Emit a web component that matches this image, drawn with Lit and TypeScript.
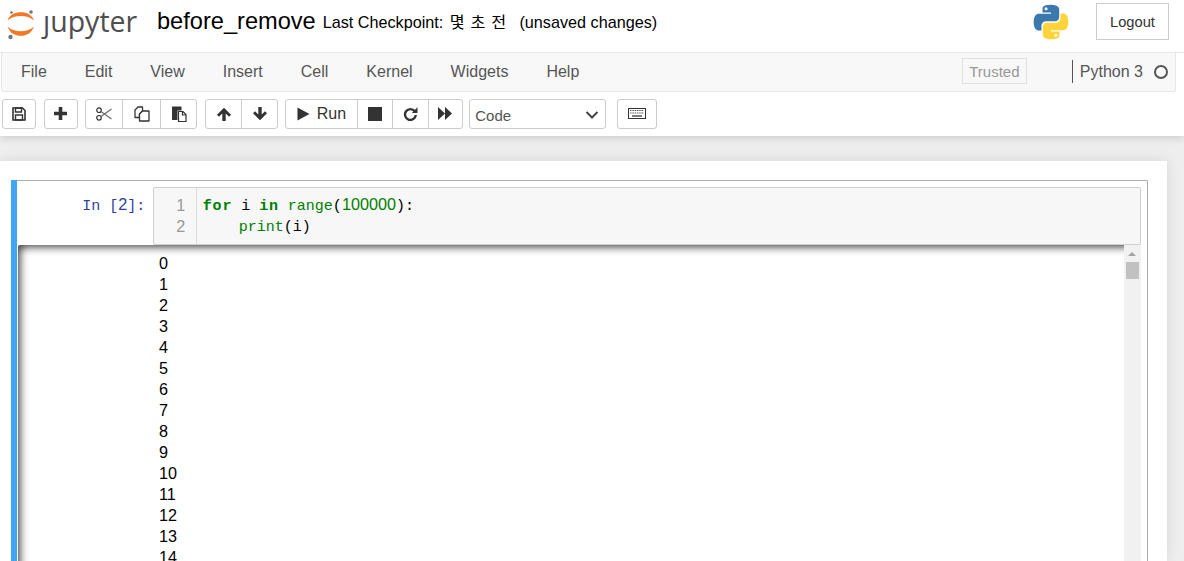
import { LitElement, html, css, svg } from "lit";
import { customElement } from "lit/decorators.js";

const ICONS: Record<string, any> = {
  save: svg`<svg width="14" height="14" viewBox="0 0 14 14"><path d="M1 1h9.500L13 3.500V13H1z" fill="none" stroke="#333" stroke-width="1.600"/><path d="M3.500 1h6v4h-6z" fill="none" stroke="#333" stroke-width="1.400"/><path d="M3.500 8h7v5h-7z" fill="none" stroke="#333" stroke-width="1.400"/></svg>`,
  plus: svg`<svg width="13" height="13" viewBox="0 0 13 13"><path d="M4.700 0h3.600v4.700H13v3.600H8.300V13H4.700V8.300H0V4.700h4.700z" fill="#333"/></svg>`,
  cut: svg`<svg width="16" height="14" viewBox="0 0 16 14"><g fill="none" stroke="#333" stroke-width="1.200"><circle cx="3" cy="3.200" r="2.300"/><circle cx="3" cy="10.800" r="2.300"/></g><path d="M5 4.500 15.500 12M5 9.500 15.500 2" fill="none" stroke="#666" stroke-width="1.100"/></svg>`,
  copy: svg`<svg width="16" height="16" viewBox="0 0 16 16"><g fill="#fff" stroke="#333" stroke-width="1.300" stroke-linejoin="round"><path d="M1 4 4 1h4.500v4L5.500 8v3.500H1z"/><path d="M5.500 8 8.500 5H15v10H5.500z"/></g></svg>`,
  paste: svg`<svg width="16" height="16" viewBox="0 0 16 16"><path d="M1 .5h9.500v4H6.500v9.500H1z" fill="#333"/><path d="M7.500 5.500h4.500l3 3V15.500H7.500z" fill="#fff" stroke="#333" stroke-width="1.200"/><path d="M11.500 5.500v3.500H15" fill="none" stroke="#333" stroke-width="1.200"/></svg>`,
  up: svg`<svg width="14" height="14" viewBox="0 0 14 14"><path d="M7 .8 14 7.800l-2 2-3.300-3.300V14H5.300V6.500L2 9.800l-2-2z" fill="#333"/></svg>`,
  down: svg`<svg width="14" height="14" viewBox="0 0 14 14"><path d="M7 13.200 0 6.200l2-2 3.300 3.300V0h3.400v7.500L12 4.200l2 2z" fill="#333"/></svg>`,
  play: svg`<svg width="13" height="14" viewBox="0 0 13 14"><path d="M.5 .5 12.500 7 .5 13.500z" fill="#333"/></svg>`,
  stop: svg`<svg width="14" height="14" viewBox="0 0 14 14"><rect width="14" height="14" fill="#333"/></svg>`,
  restart: svg`<svg width="15" height="14" viewBox="0 0 15 14"><path d="M11.700 4.200A5.400 5.400 0 1 0 12.800 8" fill="none" stroke="#333" stroke-width="2.400"/><path d="M8.800 6h5.700V.2z" fill="#333"/></svg>`,
  ff: svg`<svg width="14" height="13" viewBox="0 0 14 13"><path d="M0 0 7 6.500 0 13zM7 0 14 6.500 7 13z" fill="#333"/></svg>`,
  kbd: svg`<svg width="18" height="11" viewBox="0 0 18 11"><rect x=".5" y=".5" width="17" height="10" fill="#fff" stroke="#333"/><path d="M2 2.500h14M2 5h14" stroke="#555" stroke-width="1.200" stroke-dasharray="1.500 .8"/><path d="M4 8h10" stroke="#555" stroke-width="1.500"/></svg>`,
};

@customElement("app-root")
export class AppRoot extends LitElement {
  static styles = css`
    :host { display: block; width: 1184px; height: 561px; overflow: hidden; background: #eee;
      font-family: "Liberation Sans", "Noto Sans CJK KR", sans-serif; color: #333; }
    .top { background: #fff; height: 136px; display: flex; flex-direction: column;
      box-shadow: 0 2px 8px rgba(0,0,0,.15); position: relative; z-index: 1; }
    .head { height: 53px; display: flex; align-items: center; padding-left: 7px; box-sizing: border-box; border-bottom: 1px solid #e7e7e7; flex: none; }
    .logo { display: block; flex: none; margin-top: -7px; }
    .logotext { font-family: "Open Sans", "Liberation Sans", sans-serif; font-size: 28.500px; color: #4e4e4e; margin-left: 8px; width: 105px; line-height: 40px; margin-top: -11px; }
    .title { font-size: 23.600px; color: #000; margin-left: 9px; margin-top: -10px; }
    .ck { font-size: 16.200px; color: #000; margin-left: 7px; margin-top: -10px; white-space: pre; }
    .ko { letter-spacing: .7px; margin-left: 2px; margin-right: -1px; }
    .pylogo { margin-left: auto; margin-top: -9px; display: block; }
    .logout { margin-left: 27px; margin-right: 15px; margin-top: -9px; width: 73px; height: 37px; border: 1px solid #ccc; box-sizing: border-box;
      display: flex; align-items: center; justify-content: center; font-size: 14.700px; color: #333; }
    .menu { margin: 0 8px 0 1px; height: 39px; box-sizing: border-box; background: #f8f8f8; border: 1px solid #e7e7e7; border-top: 0; border-radius: 0 0 3px 3px;
      display: flex; align-items: center; flex: none; font-size: 16px; color: #555; }
    .mi { padding: 0 19px; }
    .trusted { margin-left: auto; font-size: 15px; color: #999; border: 1px solid #e0e0e0; height: 26px; width: 65px; box-sizing: border-box; display: flex; align-items: center; justify-content: center; margin-top: -2px; }
    .kernel { margin-left: 45px; border-left: 1px solid #555; height: 23px; padding-left: 7px; display: flex; align-items: center; margin-top: -1px; }
    .dot { width: 10px; height: 10px; border: 2px solid #555; border-radius: 50%; margin: 0 7px 0 11px; }
    .tools { display: flex; margin: 7px 0 0 1.700px; flex: none; align-items: stretch; height: 29.500px; }
    .grp { display: flex; border: 1px solid #ccc; border-radius: 3px; background: #fff; margin-right: 7.400px; box-sizing: border-box; flex: none; }
    .btn { display: flex; align-items: center; justify-content: center; border-left: 1px solid #ccc; gap: 7px; font-size: 16px; color: #333; flex: none; }
    .btn:first-child { border-left: 0; }
    .btn span { padding-top: 1px; }
    .sel { flex: none; width: 136.400px; margin-left: -1.400px; margin-right: 11.600px; border: 1px solid #ccc; border-radius: 3px; box-sizing: border-box; display: flex; align-items: center; justify-content: space-between;
      padding: 3px 6px 0 5px; font-size: 15px; color: #555; }
    .page { background: #fff; width: 1167px; height: 400px; margin-top: 25px; box-sizing: border-box; padding: 18.500px 19.500px 0 11px; box-shadow: 0 0 12px rgba(0,0,0,.1); }
    .cell { border: 1px solid #ababab; border-left: 0; border-bottom: 0; height: 382px; border-radius: 2px 2px 0 0; display: flex; box-sizing: border-box; }
    .bar { width: 6px; background: #42a5f5; flex: none; margin-top: -1px; }
    .inner { flex: 1; min-width: 0; padding: 6.800px 6px 0 1px; display: flex; flex-direction: column; }
    .mono { font-family: "Liberation Mono", "DejaVu Sans Mono", monospace; font-size: 15px; line-height: 21px; }
    .d { font-family: "Liberation Sans", sans-serif; font-size: 16.200px; }
    .inrow { display: flex; height: 57.500px; flex: none; }
    .prompt { width: 135.300px; flex: none; box-sizing: border-box; text-align: right; padding: 7px 8px 0 0; color: #303f9f; }
    .editor { flex: 1; display: flex; background: #f7f7f7; border: 1px solid #cfcfcf; border-radius: 2px; box-sizing: border-box; padding-top: 5.500px; color: #000; }
    .gutter { width: 43px; box-sizing: border-box; text-align: right; color: #999; padding-right: 11px; border-right: 1px solid #ddd; margin-top: -5.500px; padding-top: 6.500px; }
    .code { padding-left: 5.500px; white-space: pre; }
    .k { color: #008000; font-weight: bold; letter-spacing: .8px; }
    .b { color: #008000; }
    .outrow { flex: 1; display: flex; min-height: 0; position: relative; }
    .out { flex: 1; box-shadow: inset 6px 6px 8px -4px rgba(0,0,0,.75); padding: 8px 0 0 141px; color: #000; overflow: hidden; border-radius: 2px 0 0 0; }
    .out div { height: 21px; }
    .sb { width: 16.500px; background: #f1f1f1; flex: none; display: flex; flex-direction: column; align-items: center; padding-top: 7px; box-sizing: border-box; }
    .arrow { width: 0; height: 0; border-left: 4px solid transparent; border-right: 4px solid transparent; border-bottom: 4px solid #a3a3a3; }
    .thumb { width: 13px; height: 17px; background: #c1c1c1; margin-top: 6px; }
  `;

  private jlogo() {
    return svg`<svg class="logo" width="28" height="34" viewBox="0 0 28 34">
      <path d="M.5 14.500C3 8.300 7.800 6.300 13.800 6.300S24.500 8.300 27 14.500C23.500 11.200 19 10 13.800 10S4 11.200.5 14.500z" fill="#f37726"/>
      <path d="M.5 20.500C3 27.200 8 29.800 13.800 29.800S24.500 27.200 27 20.500C23.500 23.800 19 25.200 13.800 25.200S4 23.800.5 20.500z" fill="#f37726"/>
      <circle cx="24" cy="6" r="1.800" fill="#767677"/><circle cx="4.500" cy="6.500" r="1.300" fill="#767677"/><circle cx="3.500" cy="31" r="2.200" fill="#767677"/>
    </svg>`;
  }

  private pylogo() {
    return svg`<svg class="pylogo" width="36" height="36" viewBox="0 0 110 110">
      <path d="M54 2C27 2 29 14 29 14v12h26v4H19S2 28 2 55s15 26 15 26h9V68s-.5-15 15-15h25s14 .2 14-13.500V16S82 2 54 2zM40 10a4.700 4.700 0 1 1 0 9.400A4.700 4.700 0 0 1 40 10z" fill="#3b78ab"/>
      <path d="M56 108c27 0 25-12 25-12V84H55v-4h36s17 2 17-25-15-26-15-26h-9v13s.5 15-15 15H44s-14-.2-14 13.500V94s-2 14 26 14zm14-8a4.700 4.700 0 1 1 0-9.400A4.700 4.700 0 0 1 70 100z" fill="#ffd43b"/>
    </svg>`;
  }

  render() {
    const w: Record<string, number> = { save: 32.6, plus: 32.4, cut: 35.5, copy: 37.4, paste: 35.1, up: 35.5, down: 34.5, run: 70.4, stop: 34, restart: 35, ff: 33.6 };
    const b = (k: string) => html`<div class="btn" style="width:${w[k]}px">${ICONS[k]}</div>`;
    return html`
      <div class="top">
        <div class="head">
          ${this.jlogo()}
          <span class="logotext">ȷupyter</span>
          <span class="title">before_remove</span>
          <span class="ck">Last Checkpoint: <span class="ko">몇 초 전</span>   (unsaved changes)</span>
          ${this.pylogo()}
          <div class="logout">Logout</div>
        </div>
        <div class="menu">
          ${["File", "Edit", "View", "Insert", "Cell", "Kernel", "Widgets", "Help"].map((m) => html`<span class="mi">${m}</span>`)}
          <div class="trusted">Trusted</div>
          <div class="kernel">Python 3<span class="dot"></span></div>
        </div>
        <div class="tools">
          <div class="grp">${b("save")}</div>
          <div class="grp">${b("plus")}</div>
          <div class="grp">${b("cut")}${b("copy")}${b("paste")}</div>
          <div class="grp">${b("up")}${b("down")}</div>
          <div class="grp">
            <div class="btn" style="width:${w.run}px">${ICONS.play}<span>Run</span></div>
            ${b("stop")}${b("restart")}${b("ff")}
          </div>
          <div class="sel"><span>Code</span>
            <svg width="14" height="8" viewBox="0 0 14 8"><path d="M1.500 1 7 6.500 12.500 1" fill="none" stroke="#444" stroke-width="2"/></svg>
          </div>
          <div class="grp"><div class="btn" style="width:37.500px">${ICONS.kbd}</div></div>
        </div>
      </div>
      <div class="page">
        <div class="cell">
          <div class="bar"></div>
          <div class="inner">
            <div class="inrow mono">
              <div class="prompt">In [<span class="d">2</span>]:</div>
              <div class="editor">
                <div class="gutter d"><div>1</div><div>2</div></div>
                <div class="code"><span class="k">for</span> i <span class="k">in</span> <span class="b">range</span>(<span class="b d">100000</span>):
    <span class="b">print</span>(i)</div>
              </div>
            </div>
            <div class="outrow mono">
              <div class="out d">${Array.from({ length: 15 }, (_, i) => html`<div>${i}</div>`)}</div>
              <div class="sb"><div class="arrow"></div><div class="thumb"></div></div>
            </div>
          </div>
        </div>
      </div>
    `;
  }
}
